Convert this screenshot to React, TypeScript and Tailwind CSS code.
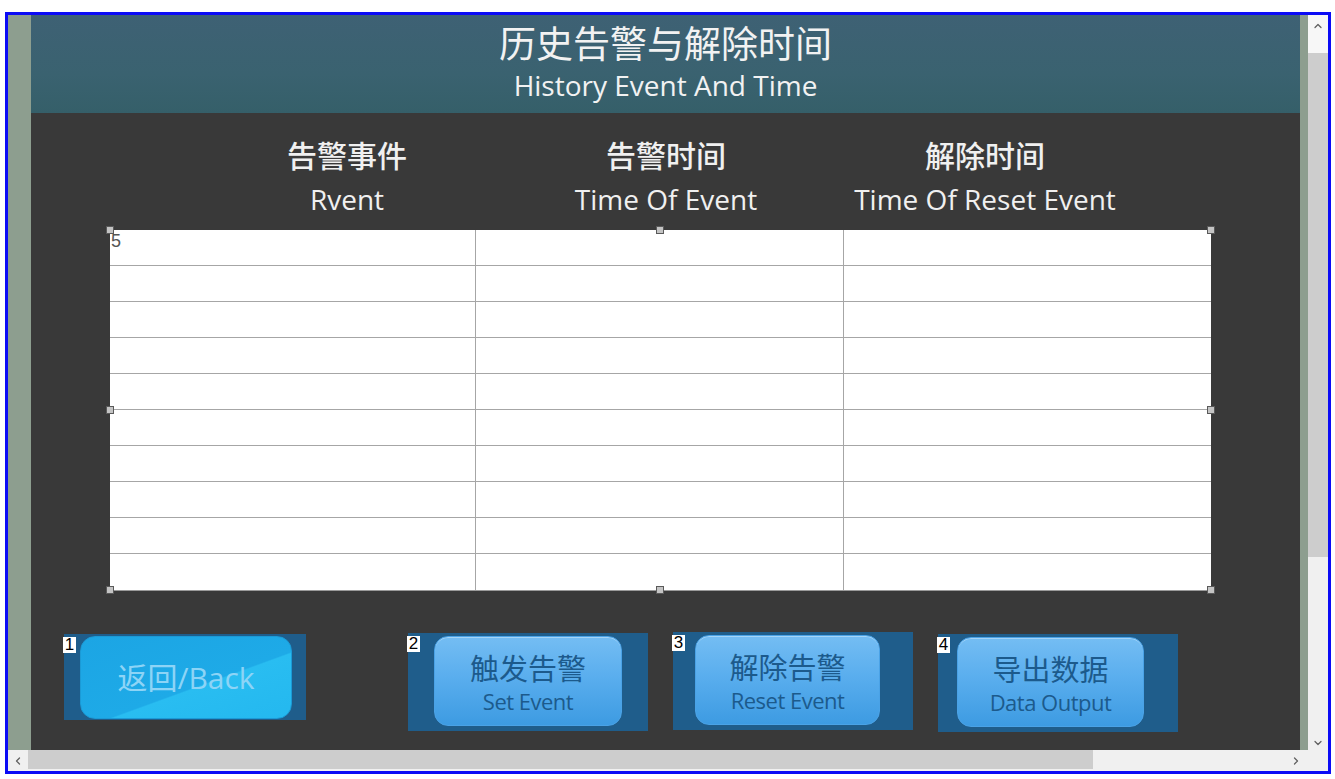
import React from "react";
import { ChevronUp, ChevronDown, ChevronLeft, ChevronRight } from "lucide-react";

const LATIN = "font-['Open_Sans','Noto_Sans_CJK_SC',sans-serif]";

const Handle: React.FC<{ className: string }> = ({ className }) => (
  <div className={`absolute w-[8px] h-[8px] bg-[#c4c4c4] border border-[#5a5a5a] ${className}`} />
);

const NumTag: React.FC<{ n: number }> = ({ n }) => (
  <div className="absolute left-[-1px] top-[3px] w-[13px] h-[16px] bg-white text-black text-[17px] leading-[16px] font-['Liberation_Sans',sans-serif] flex items-center justify-center">
    {n}
  </div>
);

const ActionButton: React.FC<{
  n: number;
  zh: string;
  en: string;
  inset: string;
  width: string;
}> = ({ n, zh, en, inset, width }) => (
  <div className={`relative w-[240px] h-[98px] bg-[#1f5d8b] ${inset}`}>
    <NumTag n={n} />
    <div
      className={`${width} h-[90px] mt-[3px] rounded-[14px] bg-[linear-gradient(180deg,#74bdf3_0%,#5aaeee_45%,#3d9be2_100%)] border border-[#4aa2e6] shadow-[inset_0_1px_0_rgba(255,255,255,0.35)] flex flex-col items-center pt-[17px] text-[#1c5a8c] ${LATIN}`}
    >
      <div className="text-[29px] leading-[30px]">{zh}</div>
      <div className="text-[22px] leading-[26px] tracking-[-0.5px] mt-[4px]">{en}</div>
    </div>
  </div>
);

const App: React.FC = () => {
  const rows = Array.from({ length: 10 });

  return (
    <div className="w-[1335px] h-[779px] bg-white pt-[12px] pl-[5px] overflow-hidden">
      <div className="w-[1326px] h-[762px] border-[3px] border-[#0b0bf5] flex flex-col">
        <div className="flex h-[735px]">
          {/* left strip */}
          <div className="w-[23px] bg-[#8d9e8f]" />

          {/* main panel */}
          <div className="w-[1269px] bg-[#393939] flex flex-col">
            <div className={`h-[98px] bg-[linear-gradient(180deg,#3e6174_0%,#3a6270_60%,#355f69_100%)] flex flex-col items-center text-[#f2f2f2] ${LATIN}`}>
              <div className="mt-[10px] text-[37px] leading-[38px]">历史告警与解除时间</div>
              <div className="mt-[6px] text-[28px] leading-[32px] font-medium">History Event And Time</div>
            </div>

            {/* column headers */}
            <div className={`h-[117px] pl-[156px] pt-[24px] flex text-[#f0f0f0] ${LATIN}`}>
              <div className="w-[320px] flex flex-col items-center">
                <div className="text-[30px] leading-[38px] font-medium">告警事件</div>
                <div className="mt-[4px] text-[28px] leading-[40px] font-medium">Rvent</div>
              </div>
              <div className="w-[318px] flex flex-col items-center">
                <div className="text-[30px] leading-[38px] font-medium">告警时间</div>
                <div className="mt-[4px] text-[28px] leading-[40px] font-medium">Time Of Event</div>
              </div>
              <div className="w-[320px] flex flex-col items-center">
                <div className="text-[30px] leading-[38px] font-medium">解除时间</div>
                <div className="mt-[4px] text-[28px] leading-[40px] font-medium">Time Of Reset Event</div>
              </div>
            </div>

            {/* table */}
            <div className="relative ml-[79px] w-[1101px] h-[361px] bg-white border-b border-[#9a9a9a]">
              {rows.map((_, i) => (
                <div key={i} className={`flex h-[36px] ${i < 9 ? "border-b border-[#a6a6a6]" : ""}`}>
                  <div className="w-[366px] border-r border-[#a6a6a6] text-[18px] leading-[22px] pl-[1px] text-[#555] font-['Liberation_Sans',sans-serif]">
                    {i === 0 ? "5" : ""}
                  </div>
                  <div className="w-[368px] border-r border-[#a6a6a6]" />
                  <div className="flex-1" />
                </div>
              ))}
              <Handle className="left-[-4px] top-[-4px]" />
              <Handle className="left-[546px] top-[-4px]" />
              <Handle className="right-[-4px] top-[-4px]" />
              <Handle className="left-[-4px] top-[176px]" />
              <Handle className="right-[-4px] top-[176px]" />
              <Handle className="left-[-4px] bottom-[-4px]" />
              <Handle className="left-[546px] bottom-[-4px]" />
              <Handle className="right-[-4px] bottom-[-4px]" />
            </div>

            {/* buttons */}
            <div className="flex items-start mt-[42px] pl-[33px]">
              <div className="relative w-[242px] h-[86px] mt-[1px] bg-[#1f5d8b]">
                <NumTag n={1} />
                <div className={`ml-[16px] mt-[2px] w-[212px] h-[83px] rounded-[15px] border border-[#1b9ad6] bg-[linear-gradient(160deg,#1ca5e4_0%,#1eaae7_58%,#29bdf1_59%,#24b8ef_100%)] flex items-center justify-center text-[30px] text-[#8dd4f6] ${LATIN}`}>
                  返回/Back
                </div>
              </div>
              <div className="ml-[102px] flex items-start gap-[25px]">
                <ActionButton n={2} zh="触发告警" en="Set Event" inset="pl-[26px]" width="w-[188px]" />
                <ActionButton n={3} zh="解除告警" en="Reset Event" inset="pl-[22px] -mt-[1px]" width="w-[185px]" />
                <ActionButton n={4} zh="导出数据" en="Data Output" inset="pl-[19px] mt-[1px]" width="w-[187px]" />
              </div>
            </div>
          </div>

          {/* right strip */}
          <div className="w-[8px] bg-[#8d9e8f]" />

          {/* vertical scrollbar */}
          <div className="w-[20px] flex flex-col bg-[#f0f0f0]">
            <div className="h-[38px] flex items-start justify-center pt-[5px] bg-[#f7f7f7]">
              <ChevronUp size={12} strokeWidth={2.5} className="text-[#606060]" />
            </div>
            <div className="h-[504px] bg-[#cdcdcd]" />
            <div className="flex-1" />
            <div className="h-[14px] flex items-center justify-center">
              <ChevronDown size={12} strokeWidth={2.5} className="text-[#606060]" />
            </div>
          </div>
        </div>

        {/* horizontal scrollbar */}
        <div className="h-[21px] flex bg-[#f0f0f0]">
          <div className="w-[20px] flex items-center justify-center">
            <ChevronLeft size={12} strokeWidth={2.5} className="text-[#606060]" />
          </div>
          <div className="w-[1065px] h-[19px] bg-[#cdcdcd]" />
          <div className="flex-1 flex items-center justify-end pr-[26px]">
            <ChevronRight size={12} strokeWidth={2.5} className="text-[#606060]" />
          </div>
        </div>
      </div>
    </div>
  );
};

export default App;
